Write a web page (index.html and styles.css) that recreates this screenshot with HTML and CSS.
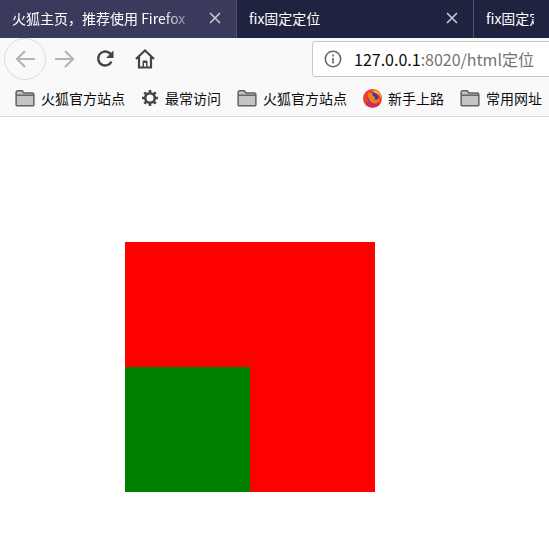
FILE: index.html
```html
<!DOCTYPE html>
<html lang="en">
<head>
    <meta charset="UTF-8">
    <title>fix固定定位</title>
    <link rel="stylesheet" href="styles.css">
</head>
<body>
    <div class="tab-bar">
        <div class="tab tab-active">
            <span class="tab-title tab-title-fade">火狐主页，推荐使用 Firefox</span>
            <svg class="tab-close" viewBox="0 0 12 12"><path d="M1 1L11 11M11 1L1 11"/></svg>
        </div>
        <div class="tab">
            <span class="tab-title">fix固定定位</span>
            <svg class="tab-close" viewBox="0 0 12 12"><path d="M1 1L11 11M11 1L1 11"/></svg>
        </div>
        <div class="tab tab-last">
            <span class="tab-title">fix固定定位</span>
        </div>
    </div>

    <div class="nav-bar">
        <div class="back-btn">
            <svg class="nav-icon" viewBox="0 0 20 20"><path class="icon-faded" d="M10 2L2 10L10 18M2.5 10H20"/></svg>
        </div>
        <svg class="nav-icon forward-icon" viewBox="0 0 20 20"><path class="icon-faded" d="M10 2L18 10L10 18M17.5 10H0"/></svg>
        <svg class="nav-icon reload-icon" viewBox="0 0 20 20">
            <path class="icon-dark" d="M16.5 12.5A7 7 0 1 1 14.5 4L17 6.5"/>
            <path class="icon-fill" d="M18.5 1.5V9H11Z"/>
        </svg>
        <svg class="nav-icon home-icon" viewBox="0 0 20 20">
            <path class="icon-home" d="M1 10L10 1.5L19 10M4 8V18.5H16V8"/>
            <path class="icon-fill" d="M7.500 19V12.500A1 1 0 0 1 8.500 11.500H11.500A1 1 0 0 1 12.500 12.500V19H11V14H9V19Z"/>
        </svg>
        <div class="url-bar">
            <svg class="info-icon" viewBox="0 0 18 18">
                <circle cx="9" cy="9" r="7.700"/>
                <path d="M9 8V13.500"/>
                <path d="M9 4.500V6.500"/>
            </svg>
            <span class="url-host">127.0.0.1</span><span class="url-rest">:8020/html定位</span>
        </div>
    </div>

    <div class="bookmarks">
        <div class="bookmark">
            <svg class="folder" viewBox="0 0 18 16"><path d="M1 14V3A1.500 1.500 0 0 1 2.500 1.500H6.500L8 3.500H15.500A1.500 1.500 0 0 1 17 5V14A1 1 0 0 1 16 15H2A1 1 0 0 1 1 14Z"/><path class="folder-line" d="M1 5.500H17"/></svg>
            <span>火狐官方站点</span>
        </div>
        <div class="bookmark">
            <svg class="gear" viewBox="0 0 18 18">
                <circle cx="9" cy="9" r="4.800"/>
                <path d="M9 1V4M9 14V17M1 9H4M14 9H17M3.300 3.300L5.500 5.500M12.500 12.500L14.700 14.700M3.300 14.700L5.500 12.500M12.500 5.500L14.700 3.300"/>
            </svg>
            <span>最常访问</span>
        </div>
        <div class="bookmark">
            <svg class="folder" viewBox="0 0 18 16"><path d="M1 14V3A1.500 1.500 0 0 1 2.500 1.500H6.500L8 3.500H15.500A1.500 1.500 0 0 1 17 5V14A1 1 0 0 1 16 15H2A1 1 0 0 1 1 14Z"/><path class="folder-line" d="M1 5.500H17"/></svg>
            <span>火狐官方站点</span>
        </div>
        <div class="bookmark">
            <svg class="firefox" viewBox="0 0 18 18">
                <circle cx="9" cy="9" r="9" fill="#e8412c"/>
                <path d="M2 13A8.500 8.500 0 0 0 17 12A8 8 0 0 1 6 12Z" fill="#d6246e"/>
                <path d="M9 1A8 8 0 0 1 17.500 10C16.500 6 14 4 11 3.500Z" fill="#ffb02e"/>
                <circle cx="9.500" cy="8.500" r="5" fill="#2f3f9e"/>
                <path d="M5 3C4 7 5.500 13.500 11 13.500C14.500 13.500 16 11 15.500 8C14.500 10 12 10.500 10.500 9.500C12 9 12 7.500 10.500 7C9 6.500 8.500 5.500 9.500 4C7.500 4 6 4 5 3Z" fill="#f47a20"/>
            </svg>
            <span>新手上路</span>
        </div>
        <div class="bookmark">
            <svg class="folder" viewBox="0 0 18 16"><path d="M1 14V3A1.500 1.500 0 0 1 2.500 1.500H6.500L8 3.500H15.500A1.500 1.500 0 0 1 17 5V14A1 1 0 0 1 16 15H2A1 1 0 0 1 1 14Z"/><path class="folder-line" d="M1 5.500H17"/></svg>
            <span>常用网址</span>
        </div>
    </div>

    <div class="box-red">
        <div class="box-green"></div>
    </div>
</body>
</html>
```
FILE: styles.css
```css
* {
    margin: 0;
    padding: 0;
    box-sizing: border-box;
}

html, body {
    height: 100%;
    overflow: hidden;
}

body {
    background: #fff;
    font-family: "Noto Sans CJK SC", "Liberation Sans", sans-serif;
    font-size: 14px;
}

/* Tabs */
.tab-bar {
    display: flex;
    height: 38px;
    background: #202340;
    color: #fff;
}

.tab {
    flex: none;
    width: 237px;
    display: flex;
    align-items: center;
    padding: 0 15px 2px 12px;
    border-right: 1px solid #50526c;
    overflow: hidden;
}

.tab-active {
    background: #3a3a5c;
}

.tab-last {
    flex: 1;
    border-right: 0;
}

.tab-title {
    flex: 1;
    white-space: nowrap;
    overflow: hidden;
}

.tab-title-fade {
    -webkit-mask-image: linear-gradient(to right, #000 80%, transparent 100%);
    mask-image: linear-gradient(to right, #000 80%, transparent 100%);
}

.tab-close {
    flex: none;
    width: 12px;
    height: 12px;
    margin-left: 9px;
    fill: none;
    stroke: #c9c9d3;
    stroke-width: 1.6;
}

/* Navigation */
.nav-bar {
    display: flex;
    align-items: center;
    height: 42px;
    padding-left: 4px;
    background: #f9f9fa;
}

.back-btn {
    flex: none;
    width: 42px;
    height: 42px;
    display: flex;
    align-items: center;
    justify-content: center;
    border: 1px solid #dcdcdc;
    border-radius: 50%;
}

.nav-icon {
    flex: none;
    width: 20px;
    height: 20px;
    fill: none;
}

.forward-icon {
    margin-left: 9px;
}

.reload-icon {
    margin-left: 20px;
}

.home-icon {
    margin-left: 20px;
}

.icon-faded {
    stroke: #b4b4b5;
    stroke-width: 2.200;
}

.icon-dark {
    stroke: #444;
    stroke-width: 2.400;
    fill: none;
}

.icon-home {
    stroke: #444;
    stroke-width: 2.200;
    fill: none;
}

.icon-fill {
    fill: #444;
}

.url-bar {
    flex: none;
    width: 260px;
    height: 36px;
    margin-left: 157px;
    display: flex;
    align-items: center;
    padding-left: 11px;
    background: #fff;
    border: 1px solid #c8c8c8;
    border-radius: 3px;
    font-size: 16px;
    white-space: nowrap;
    overflow: hidden;
}

.info-icon {
    flex: none;
    width: 18px;
    height: 18px;
    margin-right: 12px;
    fill: none;
    stroke: #666;
    stroke-width: 1.600;
}

.url-host {
    color: #0c0c0d;
}

.url-rest {
    color: #737373;
}

/* Bookmarks */
.bookmarks {
    display: flex;
    align-items: center;
    height: 37px;
    padding-left: 15px;
    gap: 16px;
    background: #f9f9fa;
    border-bottom: 1px solid #d9d9db;
    color: #0c0c0d;
    white-space: nowrap;
    overflow: hidden;
}

.bookmark {
    flex: none;
    display: flex;
    align-items: center;
    gap: 6px;
}

.folder {
    width: 20px;
    height: 18px;
    fill: #c4c4c4;
    stroke: #5f5f5f;
    stroke-width: 1.300;
}

.folder-line {
    fill: none;
}

.gear {
    width: 18px;
    height: 18px;
    fill: none;
    stroke: #444;
    stroke-width: 2.600;
}

.firefox {
    width: 19px;
    height: 19px;
}

/* Page content */
.box-red {
    width: 250px;
    height: 250px;
    margin: 125px;
    display: flex;
    align-items: flex-end;
    background: red;
}

.box-green {
    width: 125px;
    height: 125px;
    background: green;
}
```
